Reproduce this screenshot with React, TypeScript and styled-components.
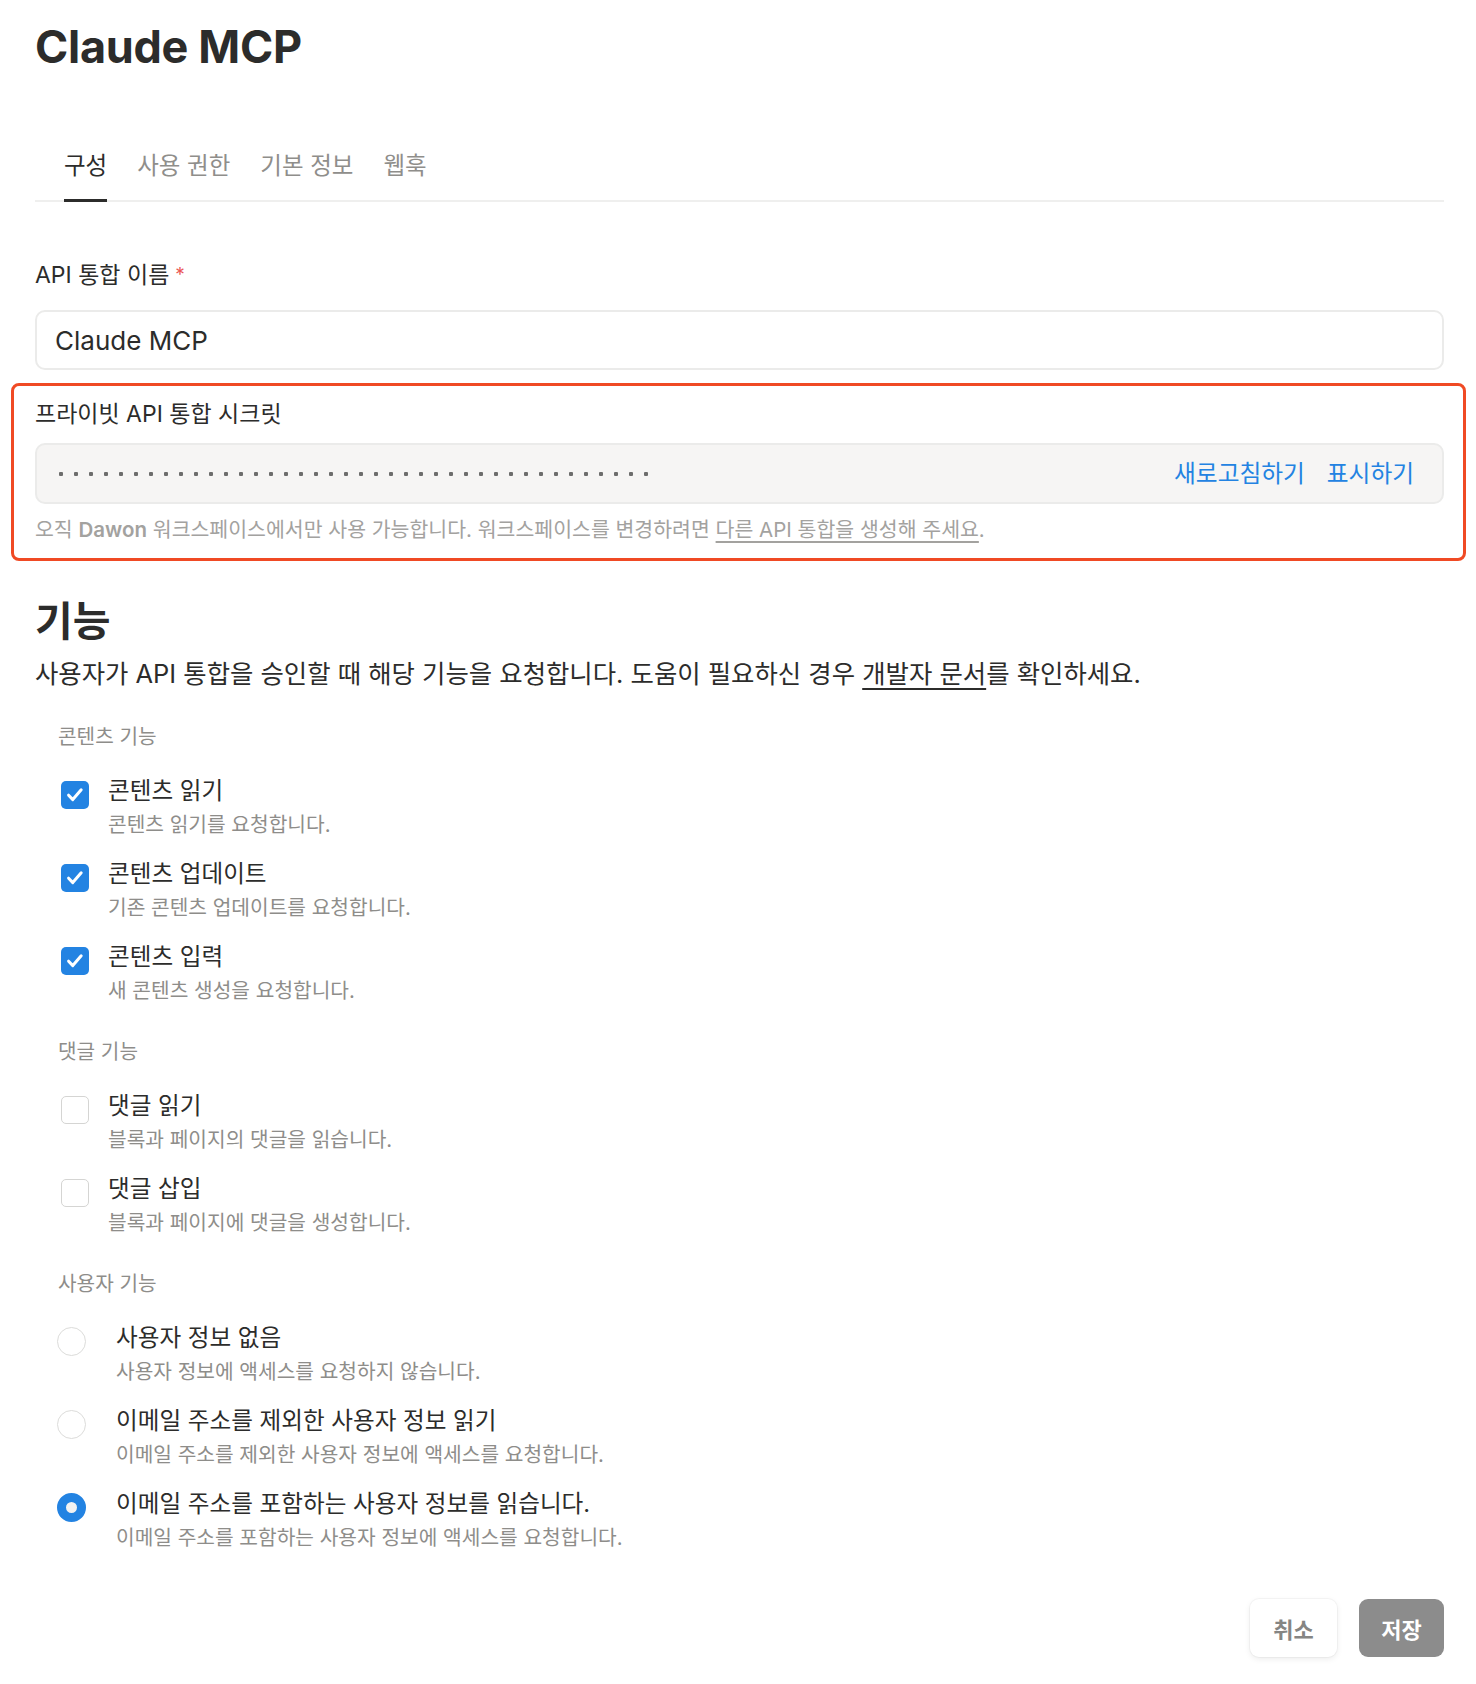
import React, { useState } from 'react';
import styled, { createGlobalStyle } from 'styled-components';

const GlobalStyle = createGlobalStyle`
  body {
    margin: 0;
    background: #ffffff;
    font-family: Inter, "Noto Sans CJK KR", sans-serif;
    color: #2c2c2b;
  }
`;

const Colors = {
  text: '#2c2c2b',
  muted: '#8e8d8a',
  faint: '#a3a29f',
  blue: '#2383e2',
  border: '#ebebea',
  highlight: '#f04a24',
};

type Option = { title: string; desc: string };

const contentOptions: Option[] = [
  { title: '콘텐츠 읽기', desc: '콘텐츠 읽기를 요청합니다.' },
  { title: '콘텐츠 업데이트', desc: '기존 콘텐츠 업데이트를 요청합니다.' },
  { title: '콘텐츠 입력', desc: '새 콘텐츠 생성을 요청합니다.' },
];

const commentOptions: Option[] = [
  { title: '댓글 읽기', desc: '블록과 페이지의 댓글을 읽습니다.' },
  { title: '댓글 삽입', desc: '블록과 페이지에 댓글을 생성합니다.' },
];

const userOptions: Option[] = [
  { title: '사용자 정보 없음', desc: '사용자 정보에 액세스를 요청하지 않습니다.' },
  {
    title: '이메일 주소를 제외한 사용자 정보 읽기',
    desc: '이메일 주소를 제외한 사용자 정보에 액세스를 요청합니다.',
  },
  {
    title: '이메일 주소를 포함하는 사용자 정보를 읽습니다.',
    desc: '이메일 주소를 포함하는 사용자 정보에 액세스를 요청합니다.',
  },
];

const tabs = ['구성', '사용 권한', '기본 정보', '웹훅'];

const CheckIcon = () => (
  <svg width="20" height="20" viewBox="0 0 20 20" fill="none">
    <path
      d="M3.6 10.2 L7.8 14.6 L16.2 4.8"
      stroke="#ffffff"
      strokeWidth="3"
      strokeLinecap="round"
      strokeLinejoin="round"
    />
  </svg>
);

const App = () => {
  const [checked, setChecked] = useState<boolean[]>([true, true, true, false, false]);
  const [userScope, setUserScope] = useState(2);

  const toggle = (i: number) =>
    setChecked((prev) => prev.map((v, j) => (j === i ? !v : v)));

  return (
    <>
      <GlobalStyle />
      <Page>
        <Title>Claude MCP</Title>

        <TabBar>
          {tabs.map((t, i) => (
            <Tab key={t} $active={i === 0}>
              {t}
            </Tab>
          ))}
        </TabBar>

        <FieldLabel>
          API 통합 이름<Required>*</Required>
        </FieldLabel>
        <TextBox>Claude MCP</TextBox>

        <SecretSection>
          <FieldLabel $tight>프라이빗 API 통합 시크릿</FieldLabel>
          <SecretBox>
            <Dots>
              {Array.from({ length: 40 }).map((_, i) => (
                <Dot key={i} />
              ))}
            </Dots>
            <SecretActions>
              <TextButton>새로고침하기</TextButton>
              <TextButton>표시하기</TextButton>
            </SecretActions>
          </SecretBox>
          <Help>
            오직 <strong>Dawon</strong> 워크스페이스에서만 사용 가능합니다.
            워크스페이스를 변경하려면 <HelpLink>다른 API 통합을 생성해 주세요</HelpLink>.
          </Help>
        </SecretSection>

        <SectionTitle>기능</SectionTitle>
        <Lead>
          사용자가 API 통합을 승인할 때 해당 기능을 요청합니다. 도움이 필요하신
          경우 <LeadLink>개발자 문서</LeadLink>를 확인하세요.
        </Lead>

        <GroupLabel>콘텐츠 기능</GroupLabel>
        <OptionList>
          {contentOptions.map((o, i) => (
            <CheckRow key={o.title} onClick={() => toggle(i)}>
              <Checkbox $on={checked[i]}>{checked[i] && <CheckIcon />}</Checkbox>
              <OptionText>
                <OptionTitle>{o.title}</OptionTitle>
                <OptionDesc>{o.desc}</OptionDesc>
              </OptionText>
            </CheckRow>
          ))}
        </OptionList>

        <GroupLabel>댓글 기능</GroupLabel>
        <OptionList>
          {commentOptions.map((o, i) => (
            <CheckRow key={o.title} onClick={() => toggle(i + 3)}>
              <Checkbox $on={checked[i + 3]}>{checked[i + 3] && <CheckIcon />}</Checkbox>
              <OptionText>
                <OptionTitle>{o.title}</OptionTitle>
                <OptionDesc>{o.desc}</OptionDesc>
              </OptionText>
            </CheckRow>
          ))}
        </OptionList>

        <GroupLabel $tight>사용자 기능</GroupLabel>
        <OptionList $gap={21}>
          {userOptions.map((o, i) => (
            <RadioRow key={o.title} onClick={() => setUserScope(i)}>
              <Radio $on={userScope === i} />
              <OptionText>
                <OptionTitle>{o.title}</OptionTitle>
                <OptionDesc>{o.desc}</OptionDesc>
              </OptionText>
            </RadioRow>
          ))}
        </OptionList>

        <Footer>
          <CancelButton>취소</CancelButton>
          <SaveButton>저장</SaveButton>
        </Footer>
      </Page>
    </>
  );
};

export default App;

const Page = styled.div`
  display: flex;
  flex-direction: column;
  padding: 19px 32px 28px 35px;
`;

const Title = styled.h1`
  margin: 0;
  font-size: 45px;
  line-height: 56px;
  font-weight: 700;
  letter-spacing: -0.3px;
  color: ${Colors.text};
`;

const TabBar = styled.div`
  display: flex;
  gap: 30px;
  margin-top: 76px;
  padding-left: 29px;
  border-bottom: 2px solid #efefee;
`;

const Tab = styled.div<{ $active?: boolean }>`
  font-size: 23.5px;
  line-height: 30px;
  padding-bottom: 18px;
  margin-bottom: -2px;
  border-bottom: 3px solid ${(p) => (p.$active ? Colors.text : 'transparent')};
  color: ${(p) => (p.$active ? Colors.text : '#8f8e8b')};
  cursor: pointer;
`;

const FieldLabel = styled.div<{ $tight?: boolean }>`
  margin-top: ${(p) => (p.$tight ? '0' : '59px')};
  font-size: 23px;
  line-height: 28px;
  color: ${Colors.text};
`;

const Required = styled.span`
  color: #eb5757;
  font-size: 19px;
  margin-left: 6px;
  vertical-align: 2px;
`;

const TextBox = styled.div`
  margin-top: 21px;
  height: 56px;
  display: flex;
  align-items: center;
  padding: 0 18px;
  border: 2px solid ${Colors.border};
  border-radius: 10px;
  font-size: 26px;
  color: ${Colors.text};
`;

const SecretSection = styled.div`
  margin: 13px -22px 0 -24px;
  padding: 14px 19px 15px 21px;
  border: 3px solid ${Colors.highlight};
  border-radius: 8px;
`;

const SecretBox = styled.div`
  margin-top: 15px;
  height: 57px;
  display: flex;
  align-items: center;
  justify-content: space-between;
  padding: 0 28px 0 22px;
  background: #f6f5f4;
  border: 2px solid ${Colors.border};
  border-radius: 10px;
`;

const Dots = styled.div`
  display: flex;
  gap: 11px;
`;

const Dot = styled.span`
  width: 4px;
  height: 4px;
  border-radius: 1px;
  background: #6d6d6c;
`;

const SecretActions = styled.div`
  display: flex;
  gap: 22px;
`;

const TextButton = styled.button`
  border: none;
  background: none;
  padding: 0;
  font-family: inherit;
  font-size: 23.7px;
  line-height: 30px;
  color: ${Colors.blue};
  cursor: pointer;
`;

const Help = styled.div`
  margin-top: 13px;
  font-size: 20.5px;
  line-height: 26px;
  color: ${Colors.faint};

  strong {
    font-weight: 600;
  }
`;

const HelpLink = styled.a`
  color: ${Colors.faint};
  text-decoration: underline;
  text-underline-offset: 4px;
`;

const SectionTitle = styled.h2`
  margin: 37px 0 0;
  font-size: 41px;
  line-height: 46px;
  font-weight: 600;
  color: ${Colors.text};
`;

const Lead = styled.p`
  margin: 14px 0 0;
  font-size: 25.4px;
  line-height: 32px;
  color: ${Colors.text};
`;

const LeadLink = styled.a`
  color: ${Colors.text};
  text-decoration: underline;
  text-underline-offset: 5px;
`;

const GroupLabel = styled.div<{ $tight?: boolean }>`
  margin: 34px 0 0 23px;
  font-size: 20.2px;
  line-height: 26px;
  color: ${Colors.muted};

  & ~ & {
    margin-top: ${(p) => (p.$tight ? '35px' : '38px')};
  }
`;

const OptionList = styled.div<{ $gap?: number }>`
  display: flex;
  flex-direction: column;
  gap: ${(p) => p.$gap ?? 21}px;
  margin-top: 26px;
`;

const CheckRow = styled.label`
  display: flex;
  align-items: flex-start;
  gap: 19px;
  padding-left: 26px;
  cursor: pointer;
`;

const RadioRow = styled(CheckRow)`
  gap: 30px;
  padding-left: 22px;
`;

const Checkbox = styled.span<{ $on?: boolean }>`
  flex: none;
  margin-top: 5px;
  width: 28px;
  height: 28px;
  box-sizing: border-box;
  border-radius: 5px;
  display: flex;
  align-items: center;
  justify-content: center;
  background: ${(p) => (p.$on ? Colors.blue : '#ffffff')};
  border: ${(p) => (p.$on ? 'none' : '1.5px solid #d5d5d3')};
`;

const Radio = styled.span<{ $on?: boolean }>`
  flex: none;
  margin-top: 4px;
  width: 29px;
  height: 29px;
  box-sizing: border-box;
  border-radius: 50%;
  background: ${(p) => (p.$on ? '#f2f2f2' : '#ffffff')};
  border: ${(p) => (p.$on ? `9px solid ${Colors.blue}` : '1.5px solid #dcdcda')};
`;

const OptionText = styled.div`
  display: flex;
  flex-direction: column;
`;

const OptionTitle = styled.div`
  font-size: 23.6px;
  line-height: 30px;
  color: ${Colors.text};
`;

const OptionDesc = styled.div`
  margin-top: 6px;
  font-size: 20.3px;
  line-height: 26px;
  color: ${Colors.muted};
`;

const Footer = styled.div`
  display: flex;
  justify-content: flex-end;
  gap: 22px;
  margin-top: 48px;
`;

const BaseButton = styled.button`
  height: 58px;
  border: none;
  border-radius: 9px;
  font-family: inherit;
  font-size: 22px;
  font-weight: 600;
  cursor: pointer;
`;

const CancelButton = styled(BaseButton)`
  width: 87px;
  background: #ffffff;
  color: #858583;
  box-shadow: 0 0 0 1px rgba(0, 0, 0, 0.03), 0 2px 6px rgba(0, 0, 0, 0.08);
`;

const SaveButton = styled(BaseButton)`
  width: 85px;
  background: #8c8c8c;
  color: #ffffff;
`;
